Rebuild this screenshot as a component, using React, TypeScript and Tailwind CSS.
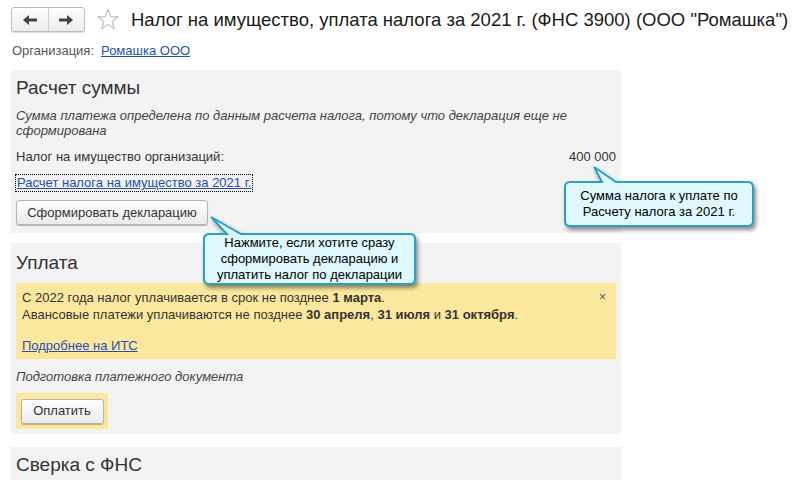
import React from "react";

const font = { fontFamily: '"Liberation Sans", Arial, sans-serif' };

function Btn({ children, className = "" }: { children: React.ReactNode; className?: string }) {
  return (
    <div
      className={
        "flex items-center justify-center h-[25px] rounded-[3px] border border-[#b3b3b3] bg-gradient-to-b from-white to-[#ebebeb] shadow-[0_1px_1px_rgba(0,0,0,0.25)] text-[13px] text-[#333] " +
        className
      }
    >
      {children}
    </div>
  );
}

function Callout({
  left,
  top,
  w,
  h,
  tail,
  children,
}: {
  left: number;
  top: number;
  w: number;
  h: number;
  tail: { ax: number; ay: number; b1: number; b2: number };
  children: React.ReactNode;
}) {
  const pad = 8;
  const W = w + pad * 2;
  const H = h + pad * 2 + (top - tail.ay);
  const oy = top - tail.ay;
  const rx = pad,
    ry = oy;
  const r = 5;
  const ax = tail.ax - left + pad;
  const b1 = tail.b1 - left + pad;
  const b2 = tail.b2 - left + pad;
  const d = `M ${rx + r} ${ry} L ${b1} ${ry} L ${ax} 0 L ${b2} ${ry} L ${rx + w - r} ${ry} Q ${rx + w} ${ry} ${rx + w} ${ry + r} L ${rx + w} ${ry + h - r} Q ${rx + w} ${ry + h} ${rx + w - r} ${ry + h} L ${rx + r} ${ry + h} Q ${rx} ${ry + h} ${rx} ${ry + h - r} L ${rx} ${ry + r} Q ${rx} ${ry} ${rx + r} ${ry} Z`;
  return (
    <div className="absolute" style={{ left: left - pad, top: tail.ay, width: W, height: H }}>
      <svg width={W} height={H} className="absolute left-0 top-0 overflow-visible">
        <defs>
          <filter id={`sh${left}`} x="-20%" y="-20%" width="140%" height="150%">
            <feDropShadow dx="2" dy="3" stdDeviation="2" floodColor="#000" floodOpacity="0.45" />
          </filter>
        </defs>
        <path d={d} fill="#dff8fd" stroke="#2aa1c2" strokeWidth="2" filter={`url(#sh${left})`} />
      </svg>
      <div
        className="absolute flex items-center justify-center text-center text-[13px] leading-[16px] text-black"
        style={{ left: pad, top: oy, width: w, height: h }}
      >
        {children}
      </div>
    </div>
  );
}

export default function App() {
  return (
    <div className="relative w-[803px] h-[480px] overflow-hidden bg-white" style={font}>
      {/* Header */}
      <div className="flex items-center h-[38px] pl-[11px] pt-[1px]">
        <div className="flex shrink-0 h-[25px] w-[74px] rounded-[3px] border border-[#bdbdbd] bg-gradient-to-b from-white to-[#ececec] shadow-[0_1px_1px_rgba(0,0,0,0.15)]">
          <div className="flex-1 flex items-center justify-center border-r border-[#cfcfcf]">
            <svg width="14" height="10" viewBox="0 0 14 10">
              <path d="M0 5 L6 0 L6 3.5 L14 3.5 L14 6.5 L6 6.5 L6 10 Z" fill="#444" />
            </svg>
          </div>
          <div className="flex-1 flex items-center justify-center">
            <svg width="14" height="10" viewBox="0 0 14 10">
              <path d="M14 5 L8 0 L8 3.5 L0 3.5 L0 6.5 L8 6.5 L8 10 Z" fill="#444" />
            </svg>
          </div>
        </div>
        <svg width="24" height="24" viewBox="0 0 24 24" className="ml-[11px] shrink-0">
          <path
            d="M12 1.5 L14.6 8.6 L22.2 8.8 L16.2 13.5 L18.3 20.8 L12 16.6 L5.7 20.8 L7.8 13.5 L1.8 8.8 L9.4 8.6 Z"
            fill="none"
            stroke="#c4c4c4"
            strokeWidth="1.2"
            strokeLinejoin="round"
          />
        </svg>
        <div className="ml-[11px] text-[18.5px] text-[#1a1a1a] whitespace-nowrap">
          Налог на имущество, уплата налога за 2021 г. (ФНС 3900) (ООО "Ромашка")
        </div>
      </div>
      <div className="flex items-center h-[26px] pl-[12px] text-[13px]">
        <span className="text-[#555]">Организация:</span>
        <span className="ml-[7px] text-[#1f4fb3] underline">Ромашка ООО</span>
      </div>

      {/* Panel 1 */}
      <div className="ml-[11px] mt-[6px] w-[610px] h-[163px] bg-[#f3f3f3] px-[5px] text-[13px] text-[#333]">
        <div className="pt-[7px] text-[19px] leading-[22px] text-[#333]">Расчет суммы</div>
        <div className="mt-[9px] italic leading-[15px] text-[#444]">
          Сумма платежа определена по данным расчета налога, потому что декларация еще не
          <br />
          сформирована
        </div>
        <div className="mt-[11px] flex justify-between leading-[15px]">
          <span>Налог на имущество организаций:</span>
          <span>400 000</span>
        </div>
        <div className="mt-[9px] h-[18px]">
          <span className="inline-block outline-1 outline-dotted outline-black px-[1px] leading-[16px] text-[#1f4fb3] underline">
            Расчет налога на имущество за 2021 г.
          </span>
        </div>
        <Btn className="mt-[9px] w-[192px]">Сформировать декларацию</Btn>
      </div>

      {/* Panel 2 */}
      <div className="ml-[11px] mt-[10px] w-[610px] h-[191px] bg-[#f3f3f3] px-[5px] text-[13px] text-[#333]">
        <div className="pt-[9px] text-[19px] leading-[22px]">Уплата</div>
        <div className="relative mt-[9px] h-[76px] bg-[#fbe89e] px-[6px] pt-[6px] leading-[17px]">
          <div>
            С 2022 года налог уплачивается в срок не позднее <b>1 марта</b>.
          </div>
          <div>
            Авансовые платежи уплачиваются не позднее <b>30 апреля</b>, <b>31 июля</b> и <b>31 октября</b>.
          </div>
          <div className="mt-[14px] text-[#1f4fb3] underline">Подробнее на ИТС</div>
          <span className="absolute right-[10px] top-[6px] text-[12px] text-[#555]">×</span>
        </div>
        <div className="mt-[10px] italic leading-[15px] text-[#444]">Подготовка платежного документа</div>
        <div className="mt-[9px] w-[92px] h-[36px] bg-[#fbe89e] flex items-center justify-center">
          <Btn className="w-[83px]">Оплатить</Btn>
        </div>
      </div>

      {/* Panel 3 */}
      <div className="ml-[11px] mt-[13px] w-[610px] h-[40px] bg-[#f3f3f3] px-[5px]">
        <div className="pt-[7px] text-[19px] leading-[22px] text-[#333]">Сверка с ФНС</div>
      </div>

      {/* Callouts */}
      <Callout left={204} top={234} w={211} h={50} tail={{ ax: 211, ay: 217, b1: 227, b2: 241 }}>
        Нажмите, если хотите сразу
        <br />
        сформировать декларацию и
        <br />
        уплатить налог по декларации
      </Callout>
      <Callout left={565} top={182} w={188} h={44} tail={{ ax: 594, ay: 167, b1: 602, b2: 616 }}>
        Сумма налога к уплате по
        <br />
        Расчету налога за 2021 г.
      </Callout>
    </div>
  );
}
